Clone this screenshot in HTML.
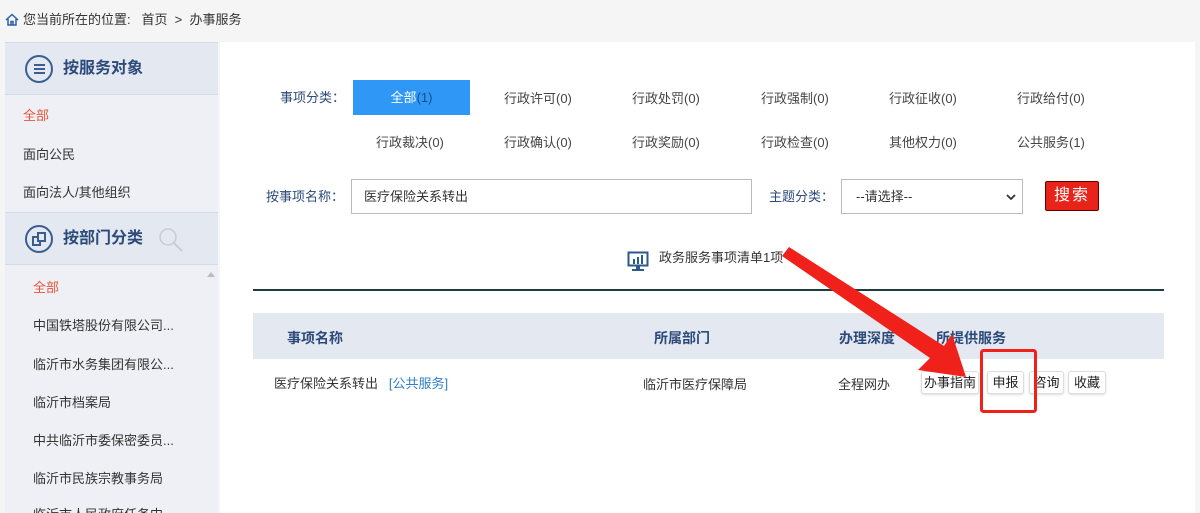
<!DOCTYPE html>
<html><head><meta charset="utf-8"><style>
*{margin:0;padding:0;box-sizing:border-box}
html,body{width:1200px;height:513px;overflow:hidden}
body{background:#f5f5f5;font-family:"Liberation Sans","Noto Sans CJK SC",sans-serif;font-size:13px;line-height:16px;color:#333;position:relative}
.a{position:absolute;white-space:nowrap}
.side{position:absolute;left:5px;top:42px;width:213px;height:471px;background:#eef0f5;overflow:hidden}
.hd{position:absolute;left:0;width:213px;height:53px;background:#e3e8f1;border-top:1px solid #d5dbe6;border-bottom:1px solid #d5dbe6}
.hd span{position:absolute;left:58px;top:16px;font-size:16px;line-height:20px;font-weight:bold;color:#2c4a7a}
.ic{position:absolute;left:20px;top:12px;width:28px;height:28px;border:2px solid #3a5d92;border-radius:50%}
.main{position:absolute;left:220px;top:42px;width:975px;height:471px;background:#fff}
.tab{position:absolute;font-size:13px;color:#444}
.btn{position:absolute;top:371px;height:23px;border:1px solid #ddd;border-radius:3px;background:#fff;font-size:13px;line-height:21px;text-align:center;box-shadow:0 1px 2px #ddd;color:#222}
</style></head><body>
<svg class="a" style="left:5px;top:13px" width="14" height="13" viewBox="0 0 14 13"><path d="M1 7 L7 1.5 L13 7 M3 6 V12 H11 V6 M6 12 V8.5 H8 V12" fill="none" stroke="#2d5ea8" stroke-width="1.5"/></svg>
<div class="a" style="left:23px;top:12px;font-size:13px;color:#333">您当前所在的位置: &nbsp; 首页 &nbsp;&gt;&nbsp; 办事服务</div>

<div class="side">
 <div class="hd" style="top:0"><div class="ic"><div style="position:absolute;left:7px;top:7px;width:11px;height:2px;background:#3a5d92;box-shadow:0 4px 0 #3a5d92,0 8px 0 #3a5d92"></div></div><span>按服务对象</span></div>
 <div class="a" style="left:18px;top:66px;color:#e8553a">全部</div>
 <div class="a" style="left:18px;top:105px">面向公民</div>
 <div class="a" style="left:18px;top:143px">面向法人/其他组织</div>
 <div class="hd" style="top:170px"><div class="ic"><div style="position:absolute;left:5px;top:9px;width:9px;height:10px;border:2px solid #3a5d92"></div><div style="position:absolute;left:10px;top:5px;width:9px;height:10px;border:2px solid #3a5d92;background:#e3e8f1"></div></div><span>按部门分类</span>
  <svg class="a" style="left:152px;top:13px" width="28" height="28"><circle cx="11" cy="11" r="8" fill="none" stroke="#c8ccd4" stroke-width="1.5"/><path d="M17 17 L25 25" stroke="#c8ccd4" stroke-width="2"/></svg></div>
 <div class="a" style="left:202px;top:230px;width:0;height:0;border-left:4px solid transparent;border-right:4px solid transparent;border-bottom:5px solid #bbb"></div>
 <div class="a" style="left:28px;top:238px;color:#e8553a">全部</div>
 <div class="a" style="left:28px;top:276px">中国铁塔股份有限公司...</div>
 <div class="a" style="left:28px;top:315px">临沂市水务集团有限公...</div>
 <div class="a" style="left:28px;top:353px">临沂市档案局</div>
 <div class="a" style="left:28px;top:391px">中共临沂市委保密委员...</div>
 <div class="a" style="left:28px;top:429px">临沂市民族宗教事务局</div>
 <div class="a" style="left:28px;top:465px">临沂市人民政府任务中</div>
</div>

<div class="main"></div>
<div class="a" style="left:280px;top:90px;color:#2c4a7a">事项分类：</div>
<div class="a" style="left:353px;top:80px;width:117px;height:35px;background:#2f97f5;color:#fff;text-align:center;line-height:35px">全部<span style="color:#1c4d8a">(1)</span></div>
<div class="tab" style="left:504px;top:91px">行政许可(0)</div>
<div class="tab" style="left:632px;top:91px">行政处罚(0)</div>
<div class="tab" style="left:761px;top:91px">行政强制(0)</div>
<div class="tab" style="left:889px;top:91px">行政征收(0)</div>
<div class="tab" style="left:1017px;top:91px">行政给付(0)</div>
<div class="tab" style="left:376px;top:135px">行政裁决(0)</div>
<div class="tab" style="left:504px;top:135px">行政确认(0)</div>
<div class="tab" style="left:632px;top:135px">行政奖励(0)</div>
<div class="tab" style="left:761px;top:135px">行政检查(0)</div>
<div class="tab" style="left:889px;top:135px">其他权力(0)</div>
<div class="tab" style="left:1017px;top:135px">公共服务(1)</div>

<div class="a" style="left:266px;top:189px;color:#2c4a7a">按事项名称：</div>
<div class="a" style="left:351px;top:179px;width:401px;height:35px;border:1px solid #bbb;padding-left:12px;line-height:33px;color:#333">医疗保险关系转出</div>
<div class="a" style="left:769px;top:189px;color:#2c4a7a">主题分类：</div>
<div class="a" style="left:841px;top:179px;width:182px;height:35px;border:1px solid #bbb;padding-left:14px;line-height:33px;color:#333">--请选择--</div>
<svg class="a" style="left:1006px;top:193px" width="10" height="8"><path d="M1 2 L5 6 L9 2" fill="none" stroke="#333" stroke-width="1.8"/></svg>
<div class="a" style="left:1045px;top:181px;width:54px;height:30px;background:#e8231a;border:1px solid #600;border-radius:2px;color:#fff;font-size:16px;text-align:center;line-height:28px;letter-spacing:2px">搜索</div>

<svg class="a" style="left:627px;top:251px" width="22" height="20"><rect x="1.5" y="1.5" width="19" height="13" fill="none" stroke="#2d5a8c" stroke-width="2"/><rect x="6" y="8" width="2" height="5" fill="#2d5a8c"/><rect x="10" y="6" width="2" height="7" fill="#2d5a8c"/><rect x="14" y="4" width="2" height="9" fill="#2d5a8c"/><rect x="9" y="15" width="4" height="3" fill="#2d5a8c"/><rect x="5" y="18" width="12" height="2" fill="#2d5a8c"/></svg>
<div class="a" style="left:659px;top:250px;color:#333">政务服务事项清单1项</div>
<div class="a" style="left:253px;top:289px;width:911px;height:2px;background:#1d3c40"></div>

<div class="a" style="left:253px;top:313px;width:911px;height:46px;background:#e3e8f1"></div>
<div class="a" style="left:287px;top:330px;font-size:14px;font-weight:bold;color:#2c4a7a">事项名称</div>
<div class="a" style="left:654px;top:330px;font-size:14px;font-weight:bold;color:#2c4a7a">所属部门</div>
<div class="a" style="left:839px;top:330px;font-size:14px;font-weight:bold;color:#2c4a7a">办理深度</div>
<div class="a" style="left:936px;top:330px;font-size:14px;font-weight:bold;color:#2c4a7a">所提供服务</div>

<div class="a" style="left:274px;top:376px">医疗保险关系转出 &nbsp; <span style="color:#2e7fc8">[公共服务]</span></div>
<div class="a" style="left:643px;top:377px">临沂市医疗保障局</div>
<div class="a" style="left:838px;top:377px">全程网办</div>
<div class="btn" style="left:921px;width:58px">办事指南</div>
<div class="btn" style="left:987px;width:37px">申报</div>
<div class="btn" style="left:1029px;width:35px">咨询</div>
<div class="btn" style="left:1068px;width:38px">收藏</div>

<svg class="a" style="left:0;top:0" width="1200" height="513">
<polygon points="782,256 789,247 944,346 952,334 966,377 918,370 930,358" fill="#f0201a"/>
<rect x="981.5" y="350.5" width="54" height="61" rx="2" fill="none" stroke="#f0201a" stroke-width="3"/>
</svg>
</body></html>
